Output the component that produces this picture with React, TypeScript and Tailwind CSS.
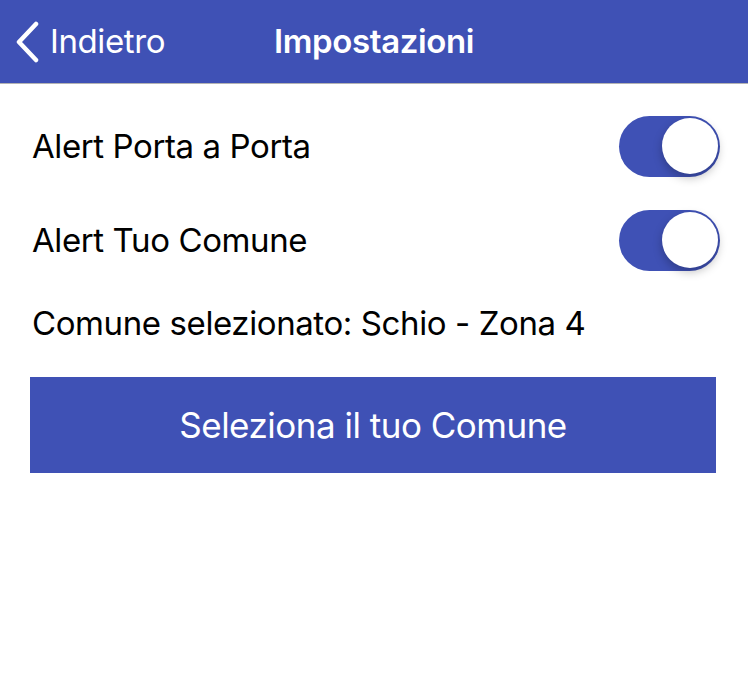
import { useState } from 'react';

function Toggle({ on, onChange }: { on: boolean; onChange: () => void }) {
  return (
    <button
      onClick={onChange}
      className={`relative w-[101px] h-[61px] rounded-full shrink-0 ${on ? 'bg-[#3f51b5]' : 'bg-gray-300'}`}
    >
      <span
        className={`absolute top-[2px] w-[56px] h-[56px] rounded-full bg-white shadow-[0_4px_10px_rgba(0,0,0,0.25)] ${on ? 'left-[43px]' : 'left-[2px]'}`}
      />
    </button>
  );
}

export default function App() {
  const [porta, setPorta] = useState(true);
  const [comune, setComune] = useState(true);

  return (
    <div className="w-[748px] h-[678px] bg-white font-['Inter',sans-serif] text-black">
      {/* Header */}
      <div className="relative h-[84px] bg-[#3f51b5] border-b border-[#b3b3b3] flex items-center justify-center text-white">
        <button className="absolute left-[14px] top-0 h-[83px] flex items-center gap-[10px]">
          <svg width="26" height="42" viewBox="0 0 26 42" fill="none">
            <path d="M22 3 L5 21 L22 39" stroke="white" strokeWidth="4.5" strokeLinecap="round" strokeLinejoin="round" />
          </svg>
          <span className="text-[33px] tracking-[-0.4px]">Indietro</span>
        </button>
        <h1 className="text-[33px] font-semibold tracking-[-0.4px]">Impostazioni</h1>
      </div>

      {/* Content */}
      <div className="pl-[32px] pr-[28px] pt-[32px]">
        <div className="flex items-center justify-between h-[61px]">
          <span className="text-[33px] tracking-[-0.4px]">Alert Porta a Porta</span>
          <Toggle on={porta} onChange={() => setPorta(!porta)} />
        </div>
        <div className="flex items-center justify-between h-[61px] mt-[33px]">
          <span className="text-[33px] tracking-[-0.4px]">Alert Tuo Comune</span>
          <Toggle on={comune} onChange={() => setComune(!comune)} />
        </div>
        <p className="text-[33px] tracking-[-0.4px] leading-[40px] mt-[32px]">Comune selezionato: Schio - Zona 4</p>
      </div>
      <div className="pl-[30px] pr-[32px] mt-[34px]">
        <button className="w-full h-[96px] bg-[#3f51b5] text-white text-[35px] tracking-[-0.5px]">
          Seleziona il tuo Comune
        </button>
      </div>
    </div>
  );
}
